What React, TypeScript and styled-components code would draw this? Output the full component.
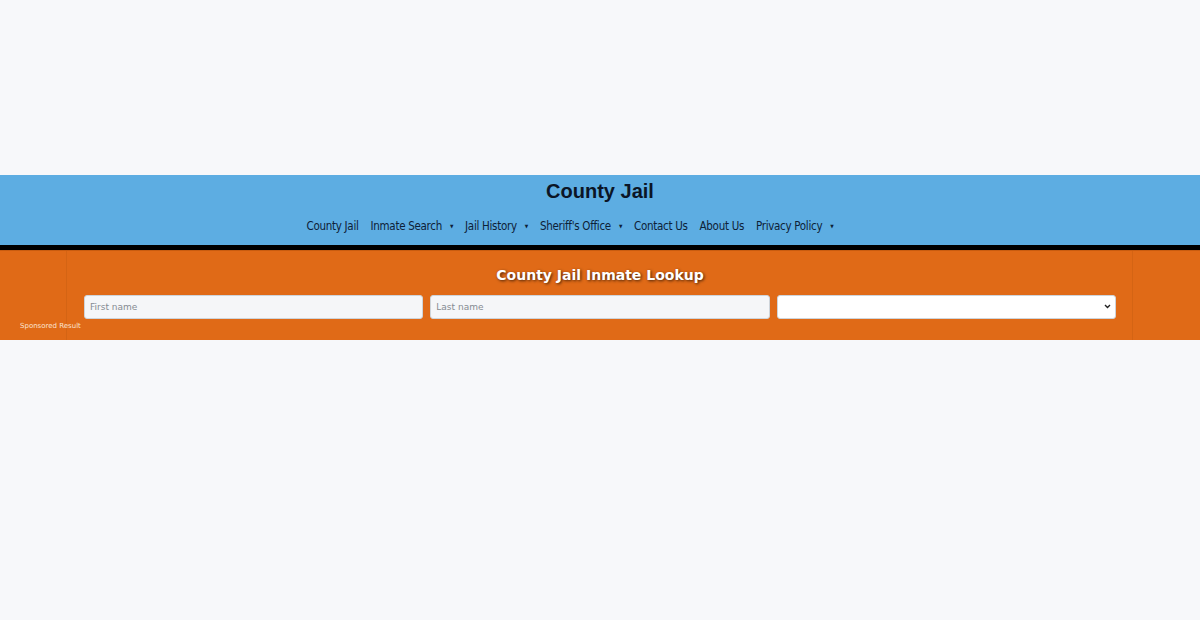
import React from 'react';
import styled, { createGlobalStyle } from 'styled-components';

const GlobalStyle = createGlobalStyle`
  html, body {
    margin: 0;
    padding: 0;
    background: #f7f8fa;
    font-family: "DejaVu Sans", sans-serif;
  }
`;

const Page = styled.div`
  padding-top: 175px;
  min-height: 620px;
  box-sizing: border-box;
`;

const Header = styled.header`
  background: #5dade2;
  border-bottom: 5px solid #000;
  height: 70px;
  display: flex;
  flex-direction: column;
  align-items: center;
`;

const Title = styled.h1`
  margin: 4px 0 0;
  font-family: "Liberation Sans", Arial, sans-serif;
  font-size: 20px;
  font-weight: 700;
  color: #0b1526;
  line-height: 24px;
`;

const Nav = styled.nav`
  display: flex;
  gap: 12px;
  margin-top: 15px;
  padding-right: 60px;
`;

const NavItem = styled.a`
  font-family: "DejaVu Sans Condensed", "DejaVu Sans", sans-serif;
  font-stretch: condensed;
  font-size: 11.5px;
  letter-spacing: -0.3px;
  color: #0d2137;
  text-decoration: none;
  display: flex;
  align-items: center;
  gap: 8px;
  line-height: 16px;
`;

const Caret = styled.span`
  font-size: 5px;
  color: #0d2137;
`;

const Lookup = styled.section`
  background: #e06a17;
  display: grid;
  grid-template-columns: 67px 1fr 68px;
  height: 90px;
  border-top: 1px solid #c85c10;
  box-sizing: border-box;
`;

const SideCol = styled.div<{ $side: 'left' | 'right' }>`
  border-${(p) => (p.$side === 'left' ? 'right' : 'left')}: 1px solid #d46414;
  display: flex;
  align-items: flex-end;
  padding: 0 0 10px 20px;
`;

const Sponsored = styled.span`
  font-size: 7px;
  color: #fbe3d0;
  white-space: nowrap;
`;

const Main = styled.div`
  padding: 14px 16px 0 17px;
  display: flex;
  flex-direction: column;
  align-items: center;
`;

const LookupTitle = styled.h2`
  margin: 0;
  font-size: 14px;
  font-weight: 700;
  color: #fff;
  text-shadow: 1px 1px 3px rgba(0, 0, 0, 0.7);
  line-height: 20px;
`;

const Fields = styled.div`
  margin-top: 10px;
  width: 100%;
  display: grid;
  grid-template-columns: repeat(3, 1fr);
  gap: 7px;
`;

const Input = styled.input`
  height: 24px;
  box-sizing: border-box;
  border: 1px solid #ced4da;
  border-radius: 3px;
  background: #f5f6f8;
  padding: 0 5px;
  font-family: "DejaVu Sans", sans-serif;
  font-size: 9px;
  color: #333;
  &::placeholder {
    color: #858b92;
  }
`;

const SelectWrap = styled.div`
  position: relative;
  display: flex;
`;

const Select = styled.select`
  flex: 1;
  height: 24px;
  box-sizing: border-box;
  border: 1px solid #ced4da;
  border-radius: 3px;
  background: #fff;
  font-size: 9px;
  appearance: none;
`;

const Chevron = styled.svg`
  position: absolute;
  right: 5px;
  top: 9px;
  pointer-events: none;
`;

const navItems: { label: string; dropdown?: boolean }[] = [
  { label: 'County Jail' },
  { label: 'Inmate Search', dropdown: true },
  { label: 'Jail History', dropdown: true },
  { label: "Sheriff's Office", dropdown: true },
  { label: 'Contact Us' },
  { label: 'About Us' },
  { label: 'Privacy Policy', dropdown: true },
];

export default function App() {
  return (
    <Page>
      <GlobalStyle />
      <Header>
        <Title>County Jail</Title>
        <Nav>
          {navItems.map((item) => (
            <NavItem key={item.label} href="#">
              {item.label}
              {item.dropdown && <Caret>▼</Caret>}
            </NavItem>
          ))}
        </Nav>
      </Header>
      <Lookup>
        <SideCol $side="left">
          <Sponsored>Sponsored Result</Sponsored>
        </SideCol>
        <Main>
          <LookupTitle>County Jail Inmate Lookup</LookupTitle>
          <Fields>
            <Input placeholder="First name" />
            <Input placeholder="Last name" />
            <SelectWrap>
              <Select defaultValue="">
                <option value=""></option>
              </Select>
              <Chevron width="7" height="5" viewBox="0 0 7 5">
                <path d="M1 1l2.5 2.5L6 1" fill="none" stroke="#222" strokeWidth="1.4" />
              </Chevron>
            </SelectWrap>
          </Fields>
        </Main>
        <SideCol $side="right" />
      </Lookup>
    </Page>
  );
}
